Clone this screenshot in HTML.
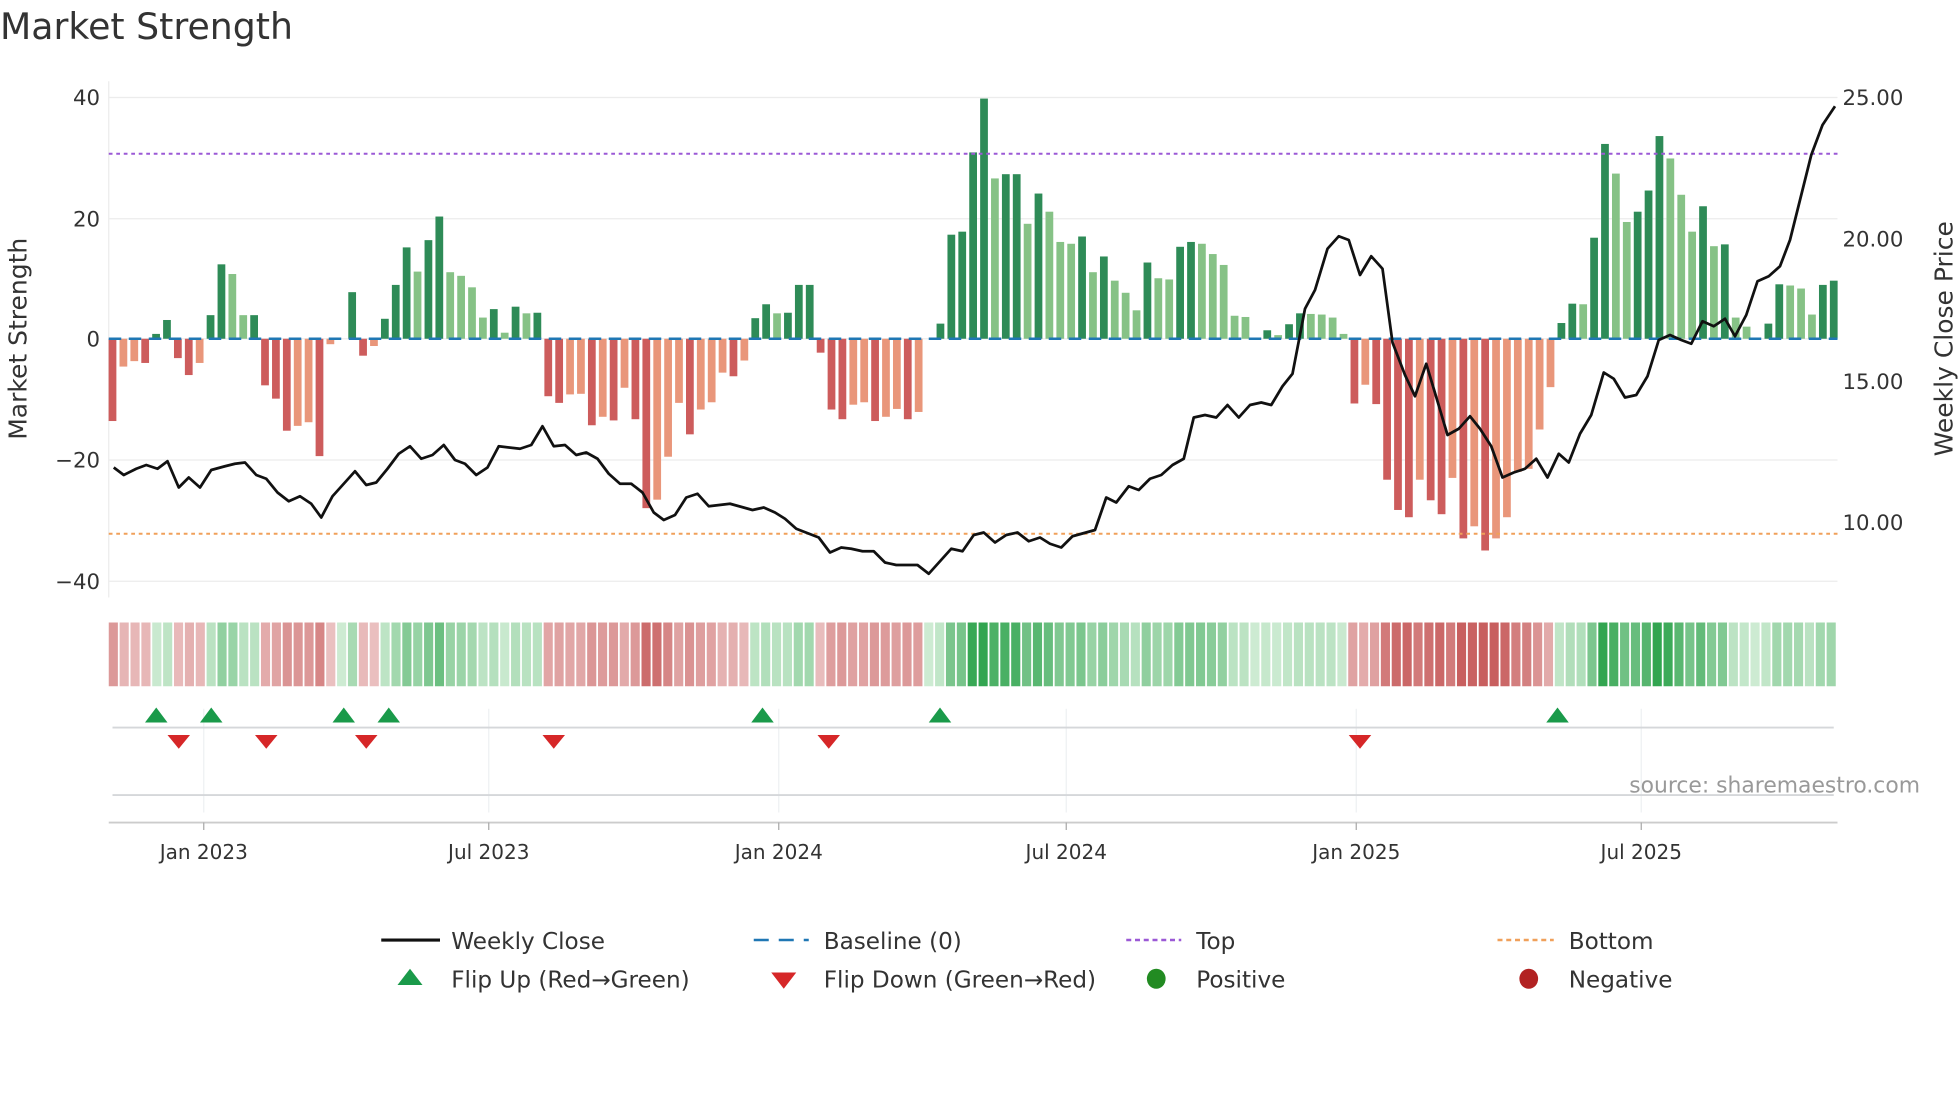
<!DOCTYPE html>
<html><head><meta charset="utf-8"><style>
html,body{margin:0;padding:0;background:#fff;width:1960px;height:1102px;overflow:hidden}
svg{display:block}
text{font-family:"DejaVu Sans","Liberation Sans",sans-serif;fill:#333}
</style></head><body>
<svg id="s" width="1960" height="1102" viewBox="0 0 1568 881.6" xmlns="http://www.w3.org/2000/svg">
<text x="0" y="31" font-size="29" fill="#333">Market Strength</text>
<g id="grid" stroke="#ececec" stroke-width="1">
<line x1="87" x2="1470" y1="78" y2="78"/><line x1="87" x2="1470" y1="175" y2="175"/>
<line x1="87" x2="1470" y1="271" y2="271"/><line x1="87" x2="1470" y1="368" y2="368"/>
<line x1="87" x2="1470" y1="465" y2="465"/><line x1="87" x2="87" y1="65" y2="478"/>
</g>
<g font-size="17" text-anchor="end">
<text x="80" y="84">40</text><text x="80" y="181">20</text><text x="80" y="277">0</text>
<text x="80" y="374">−20</text><text x="80" y="471">−40</text></g>
<g font-size="17">
<text x="1474" y="84">25.00</text><text x="1474" y="197">20.00</text>
<text x="1474" y="311">15.00</text><text x="1474" y="424">10.00</text></g>
<text transform="translate(21,271) rotate(-90)" font-size="20" text-anchor="middle">Market Strength</text>
<text transform="translate(1562,271) rotate(-90)" font-size="20" text-anchor="middle">Weekly Close Price</text>
<g id="bars"></g>
<line x1="87" x2="1470" y1="271" y2="271" stroke="#1f77b4" stroke-width="2" stroke-dasharray="10,6"/>
<line x1="87" x2="1470" y1="123" y2="123" stroke="#9b59d6" stroke-width="1.6" stroke-dasharray="3,3"/>
<line x1="87" x2="1470" y1="427" y2="427" stroke="#f0a05a" stroke-width="1.6" stroke-dasharray="3,3"/>
<polyline id="price" fill="none" stroke="#111" stroke-width="2.2" stroke-linejoin="round"/>
<g id="strip"></g>
<g stroke="#eef0f3" stroke-width="1">
<line x1="163" x2="163" y1="567" y2="650"/><line x1="391" x2="391" y1="567" y2="650"/>
<line x1="623" x2="623" y1="567" y2="650"/><line x1="853" x2="853" y1="567" y2="650"/>
<line x1="1085" x2="1085" y1="567" y2="650"/><line x1="1313" x2="1313" y1="567" y2="650"/></g>
<line x1="90" x2="1467" y1="582" y2="582" stroke="#d5d7da" stroke-width="1.5"/>
<line x1="90" x2="1467" y1="636" y2="636" stroke="#d5d7da" stroke-width="1.5"/>
<line x1="87" x2="1470" y1="658" y2="658" stroke="#ccc" stroke-width="1.5"/>
<g stroke="#aaa"><line x1="163" x2="163" y1="658" y2="664"/><line x1="391" x2="391" y1="658" y2="664"/><line x1="623" x2="623" y1="658" y2="664"/><line x1="853" x2="853" y1="658" y2="664"/><line x1="1085" x2="1085" y1="658" y2="664"/><line x1="1313" x2="1313" y1="658" y2="664"/></g>
<g id="flips"></g>
<text x="1536" y="634" font-size="17.5" text-anchor="end" style="fill:#999">source: sharemaestro.com</text>
<g font-size="16" text-anchor="middle">
<text x="163" y="687">Jan 2023</text><text x="391" y="687">Jul 2023</text><text x="623" y="687">Jan 2024</text>
<text x="853" y="687">Jul 2024</text><text x="1085" y="687">Jan 2025</text><text x="1313" y="687">Jul 2025</text></g>
<g font-size="18.5">
<line x1="305" x2="352" y1="752" y2="752" stroke="#111" stroke-width="2.5"/><text x="361" y="759">Weekly Close</text>
<line x1="603" x2="647" y1="752" y2="752" stroke="#1f77b4" stroke-width="2" stroke-dasharray="12,8"/><text x="659" y="759">Baseline (0)</text>
<line x1="901" x2="945" y1="752" y2="752" stroke="#9b59d6" stroke-width="2" stroke-dasharray="4,3"/><text x="957" y="759">Top</text>
<line x1="1198" x2="1243" y1="752" y2="752" stroke="#f0a05a" stroke-width="2" stroke-dasharray="4,3"/><text x="1255" y="759">Bottom</text>
<polygon points="318,788 338,788 328,775" fill="#1a9a4a"/><text x="361" y="790">Flip Up (Red→Green)</text>
<polygon points="617,778 637,778 627,791" fill="#d62728"/><text x="659" y="790">Flip Down (Green→Red)</text>
<ellipse cx="925" cy="783" rx="7.5" ry="8" fill="#228b22"/><text x="957" y="790">Positive</text>
<ellipse cx="1223" cy="783" rx="7.5" ry="8" fill="#b22222"/><text x="1255" y="790">Negative</text>
</g>
</svg>
<script>
var V=[[-13.6,1],[-4.6,0],[-3.7,0],[-4,1],[0.8,1],[3.1,1],[-3.2,1],[-6,1],[-4,0],[3.9,1],[12.3,1],[10.7,0],[3.9,0],[3.9,1],[-7.7,1],[-9.9,1],[-15.2,1],[-14.4,0],[-13.8,0],[-19.4,1],[-0.9,0],[0,1],[7.7,1],[-2.8,1],[-1.2,0],[3.3,1],[8.9,1],[15.1,1],[11.1,0],[16.3,1],[20.2,1],[11,0],[10.4,0],[8.5,0],[3.5,0],[4.9,1],[1,0],[5.3,1],[4.2,0],[4.3,1],[-9.5,1],[-10.6,1],[-9.2,0],[-9.1,0],[-14.3,1],[-12.9,0],[-13.5,1],[-8.1,0],[-13.3,1],[-28,1],[-26.6,0],[-19.5,0],[-10.6,0],[-15.8,1],[-11.7,0],[-10.5,0],[-5.6,0],[-6.2,1],[-3.6,0],[3.4,1],[5.7,1],[4.2,0],[4.3,1],[8.9,1],[8.9,1],[-2.3,1],[-11.7,1],[-13.3,1],[-10.9,0],[-10.5,0],[-13.6,1],[-12.9,0],[-11.6,0],[-13.3,1],[-12.1,0],[0,1],[2.5,1],[17.2,1],[17.7,1],[30.8,1],[39.7,1],[26.5,0],[27.2,1],[27.2,1],[19,0],[24,1],[21,0],[16,0],[15.7,0],[16.9,1],[11,0],[13.6,1],[9.6,0],[7.6,0],[4.7,0],[12.6,1],[10,0],[9.8,0],[15.2,1],[16,1],[15.7,0],[14,0],[12.2,0],[3.8,0],[3.6,0],[0,1],[1.4,1],[0.6,0],[2.4,1],[4.2,1],[4.1,0],[4,0],[3.5,0],[0.8,0],[-10.7,1],[-7.6,0],[-10.8,1],[-23.3,1],[-28.3,1],[-29.5,1],[-23.3,0],[-26.7,1],[-29,1],[-23,0],[-33,1],[-31,0],[-35,1],[-33,0],[-29.5,0],[-22,0],[-21.5,0],[-15,0],[-8,0],[2.6,1],[5.8,1],[5.7,0],[16.7,1],[32.2,1],[27.3,0],[19.3,0],[21,1],[24.5,1],[33.5,1],[29.8,0],[23.8,0],[17.7,0],[21.9,1],[15.3,0],[15.6,1],[3.5,0],[2,0],[0,1],[2.5,1],[9,1],[8.8,0],[8.3,0],[4,0],[8.9,1],[9.6,1]];
var NS="http://www.w3.org/2000/svg",bars=document.getElementById('bars'),strip=document.getElementById('strip');
function el(p,t,a){var e=document.createElementNS(NS,t);for(var k in a)e.setAttribute(k,a[k]);p.appendChild(e);return e;}
var sp=(1467-90)/(V.length-1);
V.forEach(function(v,i){var x=90+sp*i,val=v[0],d=v[1];
 if(val!==0){var y0=271,y1=271-val*4.84;
 var c=val>0?(d?'#2e8b57':'#86c286'):(d?'#cd5c5c':'#e9967a');
 el(bars,'rect',{x:x-3.1,y:Math.min(y0,y1),width:6.2,height:Math.abs(y1-y0),fill:c});}
 var a=Math.min(1,Math.abs(val)/32);var col;
 if(val>=0){var r=Math.round(205-(205-50)*a),g=Math.round(235-(235-165)*a),b=Math.round(210-(210-80)*a);col='rgb('+r+','+g+','+b+')';}
 else{var r=Math.round(235-(235-200)*a),g=Math.round(195-(195-95)*a),b=Math.round(195-(195-95)*a);col='rgb('+r+','+g+','+b+')';}
 var sx=87+(1470-87)/V.length*i;
 el(strip,'rect',{x:sx,y:498,width:(1470-87)/V.length-1.4,height:51,fill:col});
});
var P=[[91,374],[99,380],[109,375],[117,372],[126,375],[134,369],[143,390],[151,382],[160,390],[169,376],[180,373],[188,371],[196,370],[205,380],[213,383],[222,394],[231,401],[240,397],[249,403],[257,414],[266,397],[275,387],[284,377],[293,388],[301,386],[310,375],[319,363],[328,357],[337,367],[346,364],[355,356],[364,368],[372,371],[381,380],[390,374],[399,357],[416,359],[425,356],[434,341],[443,357],[452,356],[461,364],[469,362],[478,367],[487,379],[496,387],[505,387],[514,394],[523,410],[531,416],[540,412],[549,398],[558,395],[567,405],[584,403],[602,408],[611,406],[620,410],[628,415],[637,423],[655,430],[664,442],[673,438],[681,439],[690,441],[699,441],[708,450],[717,452],[734,452],[743,459],[761,439],[770,441],[779,428],[787,426],[796,434],[805,428],[814,426],[823,433],[832,430],[840,435],[849,438],[858,429],[876,424],[885,398],[893,402],[903,389],[911,392],[920,383],[929,380],[938,372],[947,367],[955,334],[964,332],[973,334],[982,324],[991,334],[1000,324],[1009,322],[1017,324],[1026,309],[1034,299],[1044,247],[1052,232],[1062,199],[1071,189],[1079,192],[1088,220],[1097,205],[1106,215],[1114,274],[1124,300],[1132,317],[1141,291],[1150,321],[1158,348],[1167,343],[1176,333],[1184,343],[1193,357],[1202,382],[1211,378],[1220,375],[1229,367],[1238,382],[1247,363],[1255,370],[1264,347],[1273,332],[1283,298],[1291,303],[1300,318],[1309,316],[1318,301],[1327,272],[1336,268],[1345,272],[1353,275],[1362,257],[1371,261],[1380,255],[1388,269],[1397,252],[1406,225],[1415,221],[1424,213],[1432,192],[1440,160],[1449,124],[1458,100],[1468,85]];
document.getElementById('price').setAttribute('points',P.map(function(p){return p[0]+','+p[1];}).join(' '));
var fl=document.getElementById('flips');
[125,169,275,311,610,752,1246].forEach(function(x){el(fl,'polygon',{points:(x-9)+',578 '+(x+9)+',578 '+x+',566',fill:'#1a9a4a'});});
[143,213,293,443,663,1088].forEach(function(x){el(fl,'polygon',{points:(x-9)+',588 '+(x+9)+',588 '+x+',599',fill:'#d62728'});});
</script>
</body></html>
